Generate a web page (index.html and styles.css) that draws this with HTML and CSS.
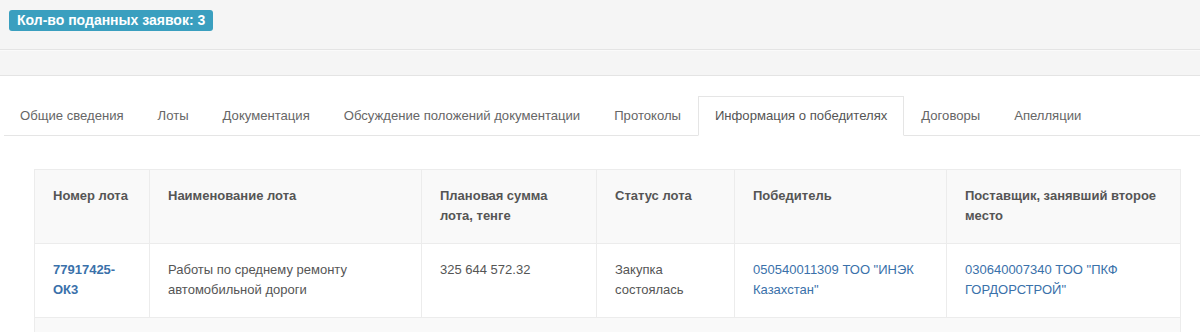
FILE: index.html
```html
<!DOCTYPE html>
<html lang="ru">
<head>
  <meta charset="UTF-8">
  <title>Информация о победителях</title>
  <link rel="stylesheet" href="styles.css">
</head>
<body>

  <div class="top-bar">
    <span class="badge">Кол-во поданных заявок: 3</span>
  </div>
  <div class="sub-bar"></div>

  <div class="content">
    <ul class="nav-tabs">
      <li><a href="#">Общие сведения</a></li>
      <li><a href="#">Лоты</a></li>
      <li><a href="#">Документация</a></li>
      <li><a href="#">Обсуждение положений документации</a></li>
      <li><a href="#">Протоколы</a></li>
      <li class="active"><a href="#">Информация о победителях</a></li>
      <li><a href="#">Договоры</a></li>
      <li><a href="#">Апелляции</a></li>
    </ul>

    <div class="table-wrap">
      <table class="lots">
        <colgroup>
          <col class="c-num">
          <col class="c-name">
          <col class="c-sum">
          <col class="c-status">
          <col class="c-winner">
          <col>
        </colgroup>
        <thead>
          <tr>
            <th>Номер лота</th>
            <th>Наименование лота</th>
            <th>Плановая сумма лота, тенге</th>
            <th>Статус лота</th>
            <th>Победитель</th>
            <th>Поставщик, занявший второе место</th>
          </tr>
        </thead>
        <tbody>
          <tr>
            <td><a href="#" class="lot-num">77917425-ОК3</a></td>
            <td>Работы по среднему ремонту автомобильной дороги</td>
            <td>325 644 572.32</td>
            <td>Закупка состоялась</td>
            <td><a href="#">050540011309 ТОО "ИНЭК Казахстан"</a></td>
            <td><a href="#">030640007340 ТОО "ПКФ ГОРДОРСТРОЙ"</a></td>
          </tr>
          <tr class="stripe">
            <td colspan="6"></td>
          </tr>
        </tbody>
      </table>
    </div>
  </div>

</body>
</html>
```

FILE: styles.css
```css
body {
  margin: 0;
  font-family: 'Liberation Sans', Arial, sans-serif;
  font-size: 13px;
  line-height: 20px;
  color: #555;
  background-color: #fff;
}
a {
  color: #3a71aa;
  text-decoration: none;
}
.top-bar {
  height: 50px;
  padding: 10px 9px 0;
  box-sizing: border-box;
  background-color: #f5f5f5;
  border-bottom: 1px solid #e4e4e4;
}
.badge {
  display: inline-block;
  background-color: #3a9fbf;
  color: #fff;
  font-size: 14px;
  font-weight: bold;
  line-height: 21px;
  padding: 0 8px;
  border-radius: 3px;
}
.sub-bar {
  height: 24px;
  background-color: #f5f5f5;
  border-top: 1px solid #fafafa;
  border-bottom: 1px solid #e4e4e4;
}
.content {
  padding: 20px 0 0 4px;
}
.nav-tabs {
  list-style: none;
  margin: 0;
  padding: 0;
  display: flex;
  border-bottom: 1px solid #e5e5e5;
}
.nav-tabs li {
  margin-bottom: -1px;
}
.nav-tabs a {
  display: block;
  padding: 9px 16px;
  font-size: 13.1px;
  line-height: 20px;
  color: #666;
  border: 1px solid transparent;
}
.nav-tabs li:first-child a {
  padding-left: 15px;
}
.nav-tabs .active a {
  color: #555;
  background-color: #fff;
  border-color: #e5e5e5;
  border-bottom-color: #fff;
}
.table-wrap {
  padding: 33px 19px 0 30px;
}
.lots {
  width: 100%;
  border-collapse: collapse;
  table-layout: fixed;
}
.c-num { width: 115px; }
.c-name { width: 272px; }
.c-sum { width: 175px; }
.c-status { width: 138px; }
.c-winner { width: 212px; }
.lots th,
.lots td {
  text-align: left;
  vertical-align: top;
  padding: 16px 18px 17px;
  border: 1px solid #ececec;
}
.lots th {
  background-color: #f9f9f9;
  font-weight: bold;
  color: #555;
}
.lots .lot-num {
  font-weight: bold;
}
.lots .stripe td {
  background-color: #f9f9f9;
  height: 20px;
}
```
